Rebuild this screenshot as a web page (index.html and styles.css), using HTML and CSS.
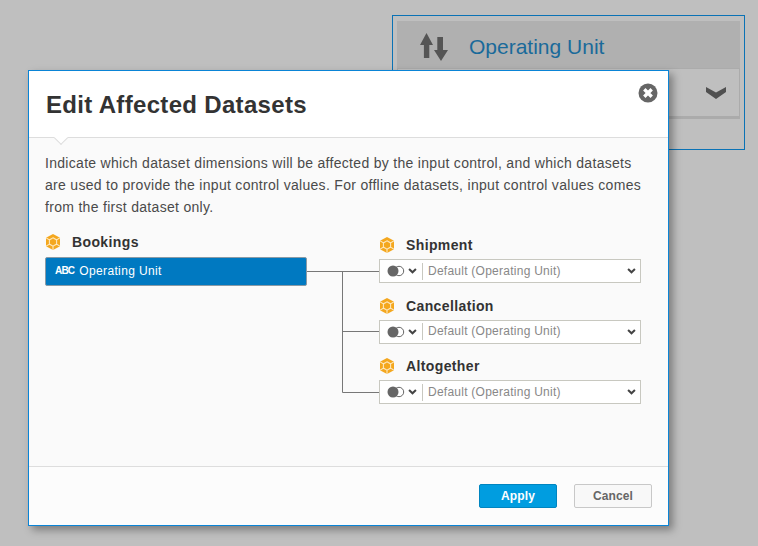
FILE: index.html
```html
<!DOCTYPE html>
<html lang="en">
<head>
<meta charset="utf-8">
<title>Edit Affected Datasets</title>
<link rel="stylesheet" href="styles.css">
</head>
<body>
<svg class="defs" width="0" height="0" aria-hidden="true">
  <symbol id="cube" viewBox="0 0 16 16">
    <path fill="#f4a71e" d="M8 0 L15 3.8 L15 12.2 L8 16 L1 12.2 L1 3.8Z"/>
    <path fill="none" stroke="#fde7bd" stroke-width="1.1" d="M8 3.8 L11.6 5.9 L11.6 10.1 L8 12.2 L4.4 10.1 L4.4 5.9Z M1 3.8 L4.4 5.9 M15 3.8 L11.6 5.9 M1 12.2 L4.4 10.1 M15 12.2 L11.6 10.1 M8 12.2 L8 16"/>
  </symbol>
  <symbol id="toggle" viewBox="0 0 18 12">
    <circle cx="12" cy="6" r="4.7" fill="none" stroke="#666" stroke-width="1"/>
    <circle cx="6" cy="6" r="5.5" fill="#666"/>
  </symbol>
  <symbol id="chev" viewBox="0 0 10 7">
    <path d="M1 1.3 L5 5 L9 1.3" fill="none" stroke="#444" stroke-width="2.4"/>
  </symbol>
</svg>

<section class="back-panel">
  <div class="back-head">
    <svg class="sort-icon" width="28" height="28" viewBox="0 0 28 28"><path fill="#555" d="M6.5 0 L13 12 L9.3 12 L9.3 25 L3.9 25 L3.9 12 L0 12Z M17.3 4 L23 4 L23 17 L28 17 L21 28 L14 17 L17.3 17Z"/></svg>
    <span class="back-title">Operating Unit</span>
  </div>
  <div class="back-row">
    <svg width="20" height="12" viewBox="0 0 20 12"><path d="M0 0 L10 5.5 L20 0 L20 5 L10 12 L0 5Z" fill="#505050"/></svg>
  </div>
</section>

<section class="dialog">
  <header class="dialog-head">
    <h1>Edit Affected Datasets</h1>
    <svg class="close" width="20" height="20" viewBox="0 0 20 20"><circle cx="10" cy="10" r="9.5" fill="#666"/><path d="M6.3 6.3 L13.7 13.7 M13.7 6.3 L6.3 13.7" stroke="#fff" stroke-width="3.4"/></svg>
    <span class="notch"></span>
  </header>
  <div class="dialog-body">
    <p class="intro">Indicate which dataset dimensions will be affected by the input control, and which datasets are used to provide the input control values. For offline datasets, input control values comes from the first dataset only.</p>
    <div class="mapping">
      <svg class="wires" width="73" height="122" viewBox="0 0 73 122"><path d="M0 0.5 H72 M35.5 0.5 V121.5 H72 M35.5 60.5 H72" fill="none" stroke="#777" stroke-width="1"/></svg>
      <div class="source">
        <div class="ds-label"><svg class="cube"><use href="#cube"/></svg><span>Bookings</span></div>
        <div class="source-field"><span class="abc">ABC</span><span>Operating Unit</span></div>
      </div>
      <div class="targets">
        <div class="target">
          <div class="ds-label"><svg class="cube"><use href="#cube"/></svg><span>Shipment</span></div>
          <div class="select"><svg class="toggle"><use href="#toggle"/></svg><svg class="chev"><use href="#chev"/></svg><span class="sel-text">Default (Operating Unit)</span><svg class="chev"><use href="#chev"/></svg></div>
        </div>
        <div class="target">
          <div class="ds-label"><svg class="cube"><use href="#cube"/></svg><span>Cancellation</span></div>
          <div class="select"><svg class="toggle"><use href="#toggle"/></svg><svg class="chev"><use href="#chev"/></svg><span class="sel-text">Default (Operating Unit)</span><svg class="chev"><use href="#chev"/></svg></div>
        </div>
        <div class="target">
          <div class="ds-label"><svg class="cube"><use href="#cube"/></svg><span>Altogether</span></div>
          <div class="select"><svg class="toggle"><use href="#toggle"/></svg><svg class="chev"><use href="#chev"/></svg><span class="sel-text">Default (Operating Unit)</span><svg class="chev"><use href="#chev"/></svg></div>
        </div>
      </div>
    </div>
  </div>
  <footer class="dialog-foot">
    <button class="btn btn-apply" type="button">Apply</button>
    <button class="btn btn-cancel" type="button">Cancel</button>
  </footer>
</section>
</body>
</html>
```

FILE: styles.css
```css
* { box-sizing: border-box; }
html, body { margin: 0; height: 100%; }
body {
  position: relative;
  width: 758px;
  height: 546px;
  overflow: hidden;
  background: #bfbfbf;
  font-family: "Liberation Sans", Arial, sans-serif;
  color: #333;
}
.defs { position: absolute; }

/* Window behind the dialog */
.back-panel {
  position: absolute;
  left: 392px;
  top: 15px;
  width: 353px;
  height: 135px;
  border: 1px solid #0a72b5;
  padding: 5px 4px 0;
}
.back-head {
  height: 47px;
  background: #b0b0b0;
  display: flex;
  align-items: center;
  padding: 4px 0 0 23px;
  gap: 21px;
}
.sort-icon { flex: none; }
.back-title { font-size: 21px; color: #1a6a9a; }
.back-row {
  height: 51px;
  background: #bfbfbf;
  border: 1px solid #ababab;
  border-bottom-width: 3px;
  display: flex;
  align-items: center;
  justify-content: flex-end;
  padding-right: 13px;
}

/* Dialog */
.dialog {
  position: absolute;
  left: 28px;
  top: 70px;
  width: 641px;
  height: 456px;
  background: #fafafa;
  border: 1px solid #0a84d6;
  box-shadow: 4px 4px 8px rgba(0, 0, 0, 0.35);
  display: flex;
  flex-direction: column;
}
.dialog-head {
  position: relative;
  height: 67px;
  flex: none;
  background: #fff;
  border-bottom: 1px solid #ddd;
  padding: 19px 0 0 17px;
}
.dialog-head h1 {
  margin: 0;
  font-size: 24px;
  line-height: 30px;
  font-weight: bold;
  color: #333;
  letter-spacing: 0.32px;
}
.close { position: absolute; right: 10px; top: 12px; }
.notch {
  position: absolute;
  left: 27px;
  bottom: -6px;
  width: 10px;
  height: 10px;
  background: #fff;
  border-right: 1px solid #ddd;
  border-bottom: 1px solid #ddd;
  transform: rotate(45deg);
}
.dialog-body { flex: 1; padding: 14px 16px 0; }
.intro {
  margin: 0;
  font-size: 14px;
  line-height: 22px;
  color: #4a4a4a;
  letter-spacing: 0.3px;
  width: 600px;
}
.mapping {
  position: relative;
  display: flex;
  justify-content: space-between;
  margin-top: 14px;
  width: 596px;
}
.wires { position: absolute; left: 262px; top: 39px; }
.source { width: 262px; }
.ds-label {
  display: flex;
  align-items: center;
  gap: 11px;
  height: 20px;
  font-size: 14px;
  font-weight: bold;
  color: #333;
  letter-spacing: 0.38px;
}
.cube { width: 16px; height: 16px; flex: none; }
.source-field {
  margin-top: 5px;
  height: 29px;
  background: #0079c1;
  border: 1px solid #8a9aa5;
  border-radius: 2px;
  color: #fff;
  font-size: 12px;
  letter-spacing: 0.36px;
  display: flex;
  align-items: center;
  padding: 0 0 2px 9px;
  gap: 5px;
}
.abc { font-size: 10px; font-weight: bold; letter-spacing: -0.8px; }
.targets { width: 262px; padding-top: 4px; }
.target { height: 50.5px; margin-bottom: 10px; }
.target .ds-label { height: 18px; }
.select {
  margin-top: 5px;
  height: 24px;
  background: #fff;
  border: 1px solid #c8c8c0;
  display: flex;
  align-items: center;
  padding: 0 4px 0 7px;
  font-size: 12px;
  letter-spacing: 0.25px;
  color: #888;
}
.toggle { width: 18px; height: 12px; flex: none; }
.chev { width: 9px; height: 6px; flex: none; }
.toggle + .chev { margin-left: 3px; }
.sel-text {
  flex: 1;
  margin-left: 5px;
  padding-left: 5px;
  line-height: 17px;
  border-left: 1px solid #c8c8c0;
}
.dialog-foot {
  height: 59px;
  flex: none;
  background: #fcfcfc;
  border-top: 1px solid #ddd;
  display: flex;
  justify-content: flex-end;
  align-items: flex-start;
  gap: 17px;
  padding: 17px 16px 0 0;
}
.btn {
  width: 78px;
  height: 24px;
  padding: 0;
  border-radius: 2px;
  font-family: inherit;
  font-size: 12px;
  font-weight: bold;
  letter-spacing: 0.1px;
}
.btn-apply { background: #009de0; border: 1px solid #0085c0; color: #fff; }
.btn-cancel { background: #f8f8f8; border: 1px solid #c8c8c8; color: #666; }
```
